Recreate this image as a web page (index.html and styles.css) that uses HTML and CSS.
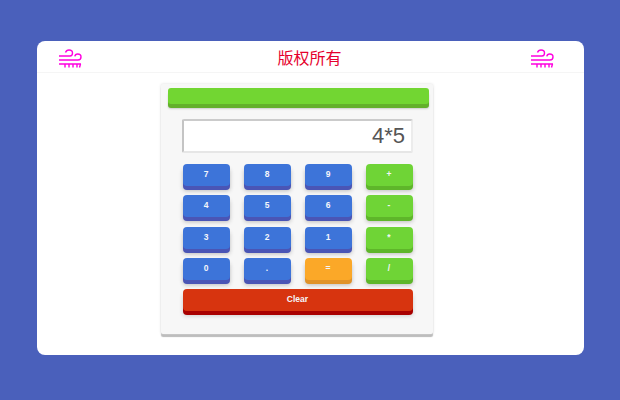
FILE: index.html
```html
<!DOCTYPE html>
<html lang="zh">
<head>
<meta charset="utf-8">
<title>Calculator</title>
<link rel="stylesheet" href="styles.css">
</head>
<body>
<main class="card">
  <header class="head">
    <svg class="wind" viewBox="0 0 24 20" aria-hidden="true"><path d="M1 7H12C13.500 7 14.500 5.700 14.500 4C14.500 2.300 13 1 11 1C9.300 1 8 2 7.500 3.500M1 11H20C21.800 11 23 9.700 23 8C23 6.300 21.600 5 19.700 5C18.300 5 17 6 16.800 7.300M1 15H23M7 15V18.500M11 15V18.500M15 15V18.500M19 15V18.500M22.500 15L21.500 18.500"/></svg>
    <h1 class="title">版权所有</h1>
    <svg class="wind" viewBox="0 0 24 20" aria-hidden="true"><path d="M1 7H12C13.500 7 14.500 5.700 14.500 4C14.500 2.300 13 1 11 1C9.300 1 8 2 7.500 3.500M1 11H20C21.800 11 23 9.700 23 8C23 6.300 21.600 5 19.700 5C18.300 5 17 6 16.800 7.300M1 15H23M7 15V18.500M11 15V18.500M15 15V18.500M19 15V18.500M22.500 15L21.500 18.500"/></svg>
  </header>
  <section class="calc">
    <div class="topbar"></div>
    <div class="display">4*5</div>
    <div class="keys">
      <button class="key blue">7</button><button class="key blue">8</button><button class="key blue">9</button><button class="key green">+</button>
      <button class="key blue">4</button><button class="key blue">5</button><button class="key blue">6</button><button class="key green">-</button>
      <button class="key blue">3</button><button class="key blue">2</button><button class="key blue">1</button><button class="key green">*</button>
      <button class="key blue">0</button><button class="key blue">.</button><button class="key orange">=</button><button class="key green">/</button>
      <button class="key red wide">Clear</button>
    </div>
  </section>
</main>
</body>
</html>
```
FILE: styles.css
```css
* { box-sizing: border-box; }
html, body { margin: 0; height: 100%; }
body {
  width: 620px;
  height: 400px;
  overflow: hidden;
  background: #4a60bb;
  padding: 41px 36px 45px 37px;
  font-family: "Liberation Sans", "Noto Sans CJK SC", sans-serif;
}
.card {
  height: 314px;
  background: #fff;
  border-radius: 8px;
  display: flex;
  flex-direction: column;
  align-items: center;
}
.head {
  width: 100%;
  height: 32px;
  flex: none;
  display: flex;
  align-items: center;
  justify-content: space-between;
  padding: 0 30px 0 21px;
  border-bottom: 1px solid #f5f5f5;
}
.wind {
  width: 24px;
  height: 20px;
  fill: none;
  stroke: #ff00e0;
  stroke-width: 1.4;
  margin-top: 5px;
}
.title {
  margin: 1px 0 0 7px;
  font-size: 16px;
  font-weight: 400;
  line-height: 30px;
  color: #e5002d;
  font-family: "Noto Sans CJK SC", sans-serif;
}
.calc {
  width: 272px;
  height: 250px;
  margin-top: 11px;
  margin-right: 27px;
  padding: 4px 4px 0 7px;
  background: #f7f7f7;
  box-shadow: 0 0 3px #ddd, 0 3px 1px #b8b8b8;
  border-radius: 2px;
}
.topbar {
  height: 16px;
  background: #72d632;
  border-radius: 3px;
  box-shadow: 0 4px 0 #63b02b, 0 5px 2px #ccc;
  margin-bottom: 15px;
}
.display {
  width: 231px;
  height: 34px;
  margin-left: 14px;
  padding-right: 6px;
  background: #fff;
  border: 2px solid;
  border-color: #cbcbcb #ececec #e6e6e6 #c4c4c4;
  border-radius: 2px;
  color: #555;
  font-size: 22px;
  line-height: 30px;
  text-align: right;
}
.keys {
  margin: 11px 0 0 15px;
  display: grid;
  grid-template-columns: repeat(4, 47px);
  justify-content: space-between;
  grid-auto-rows: 22px;
  row-gap: 9.250px;
  width: 230px;
}
.key {
  display: block;
  width: 100%;
  height: 22px;
  padding: 0 1px 1px 0;
  border: 0;
  border-radius: 4px;
  color: #f4f6fb;
  font: 700 8.500px/19px "Liberation Sans", sans-serif;
}
.blue { background: #3d74d9; box-shadow: 0 4px 0 #4a55b5, 0 5px 4px #bbb; }
.green { background: #6fd436; box-shadow: 0 4px 0 #5eb62a, 0 5px 4px #bbb; }
.orange { background: #fba828; box-shadow: 0 4px 0 #e0932a, 0 5px 4px #bbb; }
.red { background: #d7340f; box-shadow: 0 4px 0 #a80000, 0 5px 4px #ccc; }
.wide { grid-column: 1 / -1; }
```
